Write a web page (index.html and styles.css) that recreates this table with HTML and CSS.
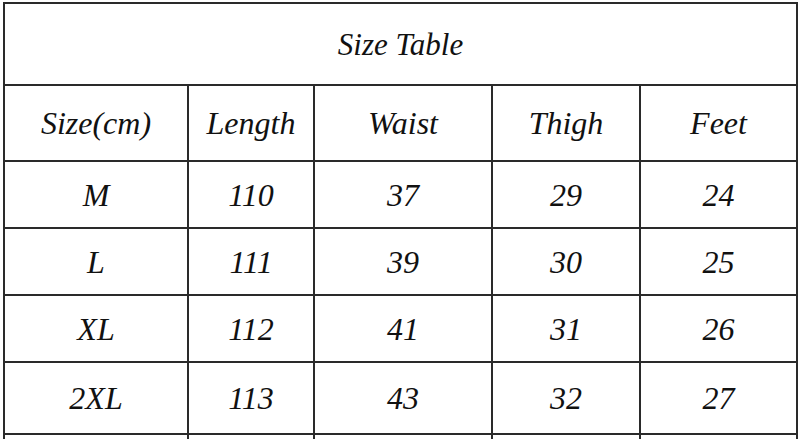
FILE: index.html
```html
<!DOCTYPE html>
<html>
<head>
<meta charset="utf-8">
<link rel="stylesheet" href="styles.css">
</head>
<body>
<div class="sheet">
  <div class="cell title">Size Table</div>
  <div class="cell">Size(cm)</div>
  <div class="cell">Length</div>
  <div class="cell">Waist</div>
  <div class="cell">Thigh</div>
  <div class="cell">Feet</div>

  <div class="cell">M</div><div class="cell">110</div><div class="cell">37</div><div class="cell">29</div><div class="cell">24</div>
  <div class="cell">L</div><div class="cell">111</div><div class="cell">39</div><div class="cell">30</div><div class="cell">25</div>
  <div class="cell">XL</div><div class="cell">112</div><div class="cell">41</div><div class="cell">31</div><div class="cell">26</div>
  <div class="cell">2XL</div><div class="cell">113</div><div class="cell">43</div><div class="cell">32</div><div class="cell">27</div>
  <div class="cell"></div><div class="cell"></div><div class="cell"></div><div class="cell"></div><div class="cell"></div>
</div>
</body>
</html>
```
FILE: styles.css
```css
html, body {
  margin: 0;
  padding: 0;
  background: #ffffff;
  overflow: hidden;
}
.sheet {
  margin: 2px 0 0 3px;
  width: 795px;
  box-sizing: border-box;
  display: grid;
  grid-template-columns: 182px 124px 176px 146px 155px;
  grid-template-rows: 80px 74px 65px 65px 65px 70px 40px;
  gap: 2px;
  padding: 2px;
  background: #2a2a2a;
  font-family: "Liberation Serif", "Times New Roman", serif;
  font-style: italic;
  font-size: 32px;
  color: #111;
}
.cell {
  background: #fff;
  display: flex;
  align-items: center;
  justify-content: center;
  line-height: 1;
}
.title {
  grid-column: 1 / -1;
  font-size: 31px;
}
```
